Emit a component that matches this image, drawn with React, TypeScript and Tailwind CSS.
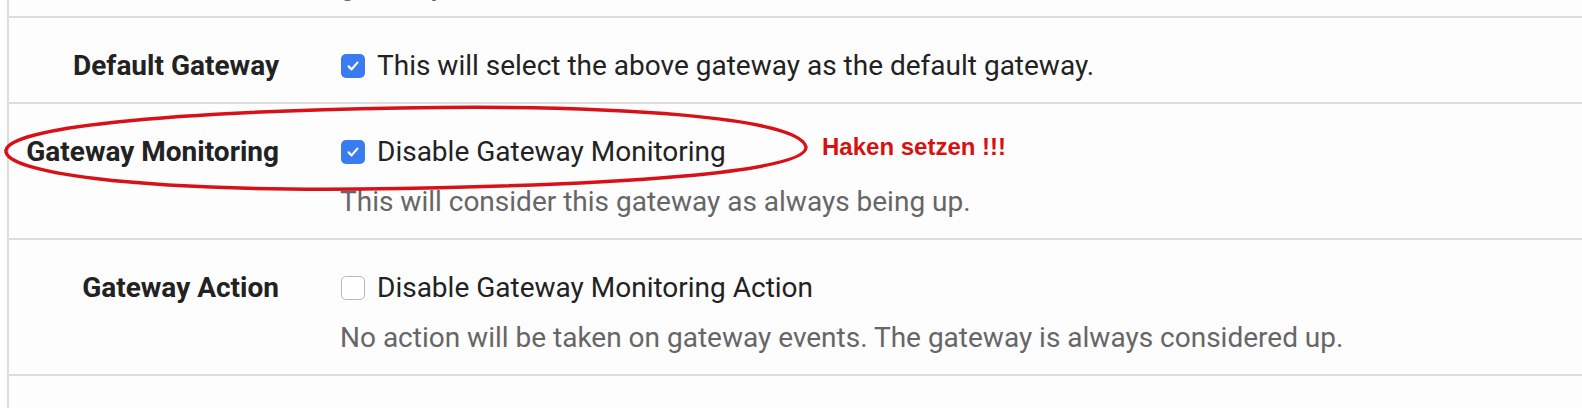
import React from "react";

function Check({ checked }: { checked: boolean }) {
  if (checked) {
    return (
      <span className="ml-px flex h-[24px] w-[24px] shrink-0 items-center justify-center rounded-[5px] bg-[#3a7bf2]">
        <svg width="16" height="16" viewBox="0 0 16 16" fill="none">
          <path d="M3.6 8.4 L6.6 11.4 L12.4 4.6" stroke="white" strokeWidth="2.2" strokeLinecap="round" strokeLinejoin="round" />
        </svg>
      </span>
    );
  }
  return <span className="ml-px h-[24px] w-[24px] shrink-0 rounded-[5px] border border-[#b9b9b9] bg-white" />;
}

function Row({ label, text, checked, help }: { label: string; text: string; checked: boolean; help?: string }) {
  return (
    <div className="flex border-b-2 border-[#dcdcdc] pt-[28px] pb-[16px]">
      <div className="w-[270px] shrink-0 text-right text-[28px] leading-[40px] font-bold text-[#222]">{label}</div>
      <div className="ml-[61px] flex flex-col">
        <div className="flex items-center gap-[12px]">
          <Check checked={checked} />
          <span className="text-[28px] leading-[40px] text-[#222]">{text}</span>
        </div>
        {help && <div className="mt-[10px] text-[28px] leading-[40px] text-[#666]">{help}</div>}
      </div>
    </div>
  );
}

export default function App() {
  return (
    <div className="relative h-[408px] w-[1582px] overflow-hidden bg-[#fdfdfd] font-['Roboto',sans-serif]">
      <div className="ml-[7px] h-full border-l-2 border-[#dcdcdc]">
        <div className="h-[18px] overflow-hidden border-b-2 border-[#dcdcdc]">
          <div className="-mt-[34px] ml-[331px] text-[28px] leading-[40px] text-[#666]">gateway</div>
        </div>
        <Row label="Default Gateway" text="This will select the above gateway as the default gateway." checked={true} />
        <Row
          label="Gateway Monitoring"
          text="Disable Gateway Monitoring"
          checked={true}
          help="This will consider this gateway as always being up."
        />
        <Row
          label="Gateway Action"
          text="Disable Gateway Monitoring Action"
          checked={false}
          help="No action will be taken on gateway events. The gateway is always considered up."
        />
      </div>
      <svg className="pointer-events-none absolute left-0 top-0" width="1582" height="408" viewBox="0 0 1582 408">
        <path
          d="M 6 150 C 10 128 160 112 400 108 C 620 104 800 118 806 147 C 808 172 620 186 360 189 C 130 191 2 172 6 150 Z"
          fill="none"
          stroke="#da1018"
          strokeWidth="3.5"
        />
      </svg>
      <div className="absolute left-[822px] top-[135px] font-['Liberation_Sans',Arial,sans-serif] text-[24px] leading-none font-bold text-[#d81010]">
        Haken setzen !!!
      </div>
    </div>
  );
}
